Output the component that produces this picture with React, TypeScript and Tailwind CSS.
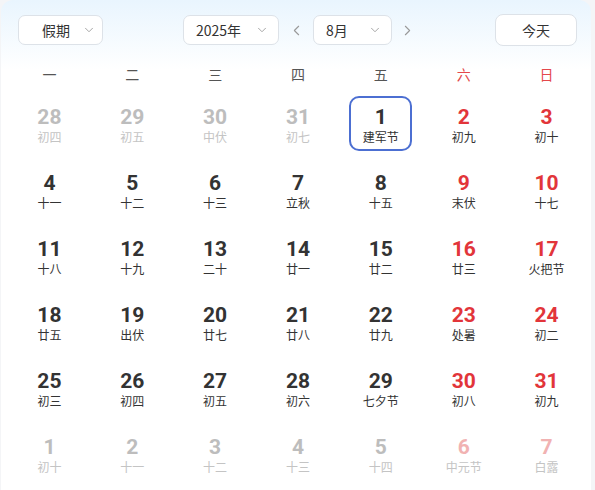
import React from 'react';
import { ChevronDown, ChevronLeft, ChevronRight } from 'lucide-react';

type Day = {
  n: number;
  lunar: string;
  muted?: boolean;
  weekend?: boolean;
  selected?: boolean;
};

const WEEK = ['一', '二', '三', '四', '五', '六', '日'];

// 2025年8月，周一开头，前后补齐上下月
const rows: [number, string][][] = [
  [[28, '初四'], [29, '初五'], [30, '中伏'], [31, '初七'], [1, '建军节'], [2, '初九'], [3, '初十']],
  [[4, '十一'], [5, '十二'], [6, '十三'], [7, '立秋'], [8, '十五'], [9, '末伏'], [10, '十七']],
  [[11, '十八'], [12, '十九'], [13, '二十'], [14, '廿一'], [15, '廿二'], [16, '廿三'], [17, '火把节']],
  [[18, '廿五'], [19, '出伏'], [20, '廿七'], [21, '廿八'], [22, '廿九'], [23, '处暑'], [24, '初二']],
  [[25, '初三'], [26, '初四'], [27, '初五'], [28, '初六'], [29, '七夕节'], [30, '初八'], [31, '初九']],
  [[1, '初十'], [2, '十一'], [3, '十二'], [4, '十三'], [5, '十四'], [6, '中元节'], [7, '白露']],
];

const days: Day[][] = rows.map((row, r) =>
  row.map(([n, lunar], c) => ({
    n,
    lunar,
    muted: (r === 0 && c < 4) || r === 5,
    weekend: c >= 5,
    selected: r === 0 && c === 4,
  }))
);

const Select: React.FC<{ label: string; width: string; center?: boolean }> = ({ label, width, center }) => (
  <div
    className={`${width} h-[30px] bg-white border border-[#dde2e8] rounded-[7px] flex items-center whitespace-nowrap text-[14px] text-[#333] ${
      center ? 'pl-[23px] pr-[8px] gap-[12px]' : 'pl-[12px] pr-[9px] justify-between'
    }`}
  >
    <span>{label}</span>
    <ChevronDown size={14} strokeWidth={1.5} className="text-[#999] shrink-0" />
  </div>
);

const Cell: React.FC<{ d: Day }> = ({ d }) => {
  let numColor = 'text-[#333]';
  let lunarColor = 'text-[#333]';
  if (d.muted) {
    numColor = d.weekend ? 'text-[#f1b2b2]' : 'text-[#bdbdbd]';
    lunarColor = 'text-[#c4c4c4]';
  } else if (d.weekend) {
    numColor = 'text-[#e2353a]';
  }
  return (
    <div className="h-[66px] flex justify-center pt-[6px]">
      <div
        className={`w-[63px] h-[55px] rounded-[10px] border-2 flex flex-col items-center pt-[7px] ${
          d.selected ? 'border-[#4c6fd2]' : 'border-transparent'
        }`}
      >
        <div className={`text-[21px] leading-[24px] font-bold font-['Roboto'] ${numColor}`}>{d.n}</div>
        <div className={`text-[12px] leading-[16px] ${lunarColor}`}>{d.lunar}</div>
      </div>
    </div>
  );
};

export default function App() {
  return (
    <div className="w-[595px] h-[490px] bg-[#f4f5f7] overflow-hidden font-['Noto_Sans_CJK_SC','Noto_Sans',sans-serif]">
      <div className="ml-px w-[590px] h-[500px] rounded-t-[12px] bg-gradient-to-b from-[#e9f5fe] via-white via-[70px] to-white">
        {/* 顶部工具栏 */}
        <div className="h-[59px] pt-[15px] pl-[17px] pr-[14px] flex items-start">
          <Select label="假期" width="w-[85px]" center />
          <div className="ml-[80px] flex items-center">
            <Select label="2025年" width="w-[96px]" />
            <ChevronLeft size={17} strokeWidth={1.5} className="text-[#999] ml-[9px] mr-[8px]" />
            <Select label="8月" width="w-[79px]" />
            <ChevronRight size={17} strokeWidth={1.5} className="text-[#999] ml-[7px]" />
          </div>
          <button className="ml-auto mt-[-1px] w-[82px] h-[32px] bg-white border border-[#dde2e8] rounded-[8px] text-[14px] text-[#333]">
            今天
          </button>
        </div>

        <div className="pl-[7px] pr-[3px]">
          {/* 星期 */}
          <div className="grid grid-cols-7 h-[31px] items-center">
            {WEEK.map((w, i) => (
              <div key={w} className={`text-center text-[14px] ${i >= 5 ? 'text-[#e4484c]' : 'text-[#555]'}`}>
                {w}
              </div>
            ))}
          </div>

          {/* 日期 */}
          <div className="grid grid-cols-7">
            {days.flat().map((d, i) => (
              <Cell key={i} d={d} />
            ))}
          </div>
        </div>
      </div>
    </div>
  );
}
